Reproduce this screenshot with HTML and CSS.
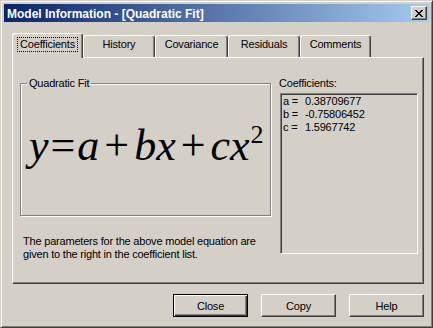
FILE: index.html
```html
<!DOCTYPE html>
<html>
<head>
<meta charset="utf-8">
<title>Model Information</title>
<link rel="stylesheet" href="styles.css">
</head>
<body>
<div class="window">
  <div class="titlebar">
    <span class="title">Model Information - [Quadratic Fit]</span>
    <button class="close-btn" aria-label="Close">
      <svg width="8" height="7" viewBox="0 0 8 7" shape-rendering="crispEdges">
        <path d="M0 0h2v1h-2z M6 0h2v1h-2z M1 1h2v1h-2z M5 1h2v1h-2z M2 2h4v1h-4z M3 3h2v1h-2z M2 4h4v1h-4z M1 5h2v1h-2z M5 5h2v1h-2z M0 6h2v1h-2z M6 6h2v1h-2z" fill="#000"/>
      </svg>
    </button>
  </div>
  <div class="client">
    <div class="tabs">
      <div class="tab tab-selected w-coef"><span class="focus">Coefficients</span></div>
      <div class="tab w-history">History</div>
      <div class="tab w-cov">Covariance</div>
      <div class="tab w-res">Residuals</div>
      <div class="tab w-com">Comments</div>
    </div>
    <div class="panel">
      <div class="left-col">
        <fieldset class="group">
          <legend>Quadratic Fit</legend>
          <div class="equation"><i>y</i><span class="eq">=</span><i>a</i><span class="op">+</span><i>bx</i><span class="op">+</span><i>cx</i><span class="sup">2</span></div>
        </fieldset>
        <p class="desc">The parameters for the above model equation are given to the right in the coefficient list.</p>
      </div>
      <div class="right-col">
        <div class="list-label">Coefficients:</div>
        <div class="listbox">
          <div class="row"><span class="key">a =</span><span>0.38709677</span></div>
          <div class="row"><span class="key">b =</span><span>-0.75806452</span></div>
          <div class="row"><span class="key">c =</span><span>1.5967742</span></div>
        </div>
      </div>
    </div>
    <div class="buttons">
      <button class="btn btn-default">Close</button>
      <button class="btn">Copy</button>
      <button class="btn">Help</button>
    </div>
  </div>
</div>
</body>
</html>
```
FILE: styles.css
```css
html, body {
  margin: 0;
  padding: 0;
  background: #d4d0c8;
}

.window {
  width: 433px;
  height: 328px;
  box-sizing: border-box;
  border: 1px solid;
  border-color: #d4d0c8 #404040 #404040 #d4d0c8;
  box-shadow: inset 1px 1px #ffffff, inset -1px -1px #808080;
  padding: 3px;
  background: #d4d0c8;
  font-family: "Liberation Sans", Arial, sans-serif;
  font-size: 11px;
  letter-spacing: -0.2px;
  color: #000;
}

.titlebar {
  height: 18px;
  display: flex;
  align-items: flex-start;
  justify-content: space-between;
  background: linear-gradient(to right, #0a246a, #a6caf0);
}

.title {
  color: #fff;
  font-weight: bold;
  font-size: 12px;
  letter-spacing: 0;
  line-height: 14px;
  padding: 3px 0 0 3px;
  white-space: nowrap;
}

.close-btn {
  width: 16px;
  height: 14px;
  margin: 2px 2px 0 0;
  padding: 0;
  display: flex;
  align-items: center;
  justify-content: center;
  background: #d4d0c8;
  border: 1px solid;
  border-color: #ffffff #404040 #404040 #ffffff;
  box-shadow: inset -1px -1px #808080;
  box-sizing: border-box;
}

.client {
  padding: 11px 5px 0 8px;
}

.tabs {
  height: 24px;
  display: flex;
  align-items: flex-end;
}

.tab {
  height: 22px;
  box-sizing: border-box;
  border-top: 1px solid #fff;
  border-left: 1px solid #fff;
  border-right: 1px solid #404040;
  box-shadow: inset -1px 0 #808080;
  border-radius: 3px 3px 0 0;
  display: flex;
  justify-content: center;
  align-items: flex-start;
  padding-top: 2px;
  line-height: 13px;
  white-space: nowrap;
  background: #d4d0c8;
}

.tab-selected {
  height: 25px;
  margin-bottom: -1px;
  padding-top: 3px;
  position: relative;
  z-index: 1;
}

.focus {
  border: 1px dotted #000;
  padding: 0 2px;
  line-height: 13px;
}

.w-coef { width: 71px; }
.w-history { width: 72px; }
.w-cov { width: 73px; }
.w-res { width: 72px; }
.w-com { width: 71px; }

.panel {
  height: 227px;
  box-sizing: border-box;
  border: 1px solid;
  border-color: #ffffff #404040 #404040 #ffffff;
  box-shadow: inset -1px -1px #808080;
  padding: 19px 0 0 7px;
  display: flex;
  gap: 8px;
}

.left-col {
  width: 251px;
}

.group {
  width: 251px;
  box-sizing: border-box;
  margin: 0;
  padding: 0;
  border: 1px solid #808080;
  box-shadow: inset 1px 1px #ffffff, 1px 1px #ffffff;
  min-width: 0;
}

.group legend {
  margin-left: 6px;
  padding: 0 2px;
  line-height: 13px;
  background: #d4d0c8;
}

.equation {
  height: 125px;
  box-sizing: border-box;
  padding: 35px 0 0 8px;
  font-family: "Liberation Serif", "Times New Roman", serif;
  font-size: 44px;
  line-height: 42px;
  letter-spacing: 0;
  white-space: nowrap;
}

.equation i {
  font-style: italic;
}

.eq {
  margin: 0 2px;
}

.op {
  margin: 0 5px;
}

.sup {
  font-size: 26px;
  line-height: 0;
  vertical-align: 17px;
  margin-left: 1px;
}

.desc {
  margin: 19px 0 0 3px;
  width: 248px;
  line-height: 13px;
}

.right-col {
  display: flex;
  flex-direction: column;
}

.list-label {
  line-height: 13px;
}

.listbox {
  margin: 3px 0 0 1px;
  width: 138px;
  height: 161px;
  box-sizing: border-box;
  border: 1px solid;
  border-color: #808080 #ffffff #ffffff #808080;
  box-shadow: inset 1px 1px #404040;
  background: #d4d0c8;
  padding: 1px 2px;
}

.row {
  line-height: 13px;
  white-space: nowrap;
}

.key {
  display: inline-block;
  width: 22px;
}

.buttons {
  display: flex;
  justify-content: flex-end;
  gap: 13px;
  margin-top: 10px;
}

.btn {
  width: 75px;
  height: 23px;
  box-sizing: border-box;
  background: #d4d0c8;
  border: 1px solid;
  border-color: #ffffff #404040 #404040 #ffffff;
  box-shadow: inset -1px -1px #808080;
  font-family: "Liberation Sans", Arial, sans-serif;
  font-size: 11px;
  letter-spacing: -0.2px;
  color: #000;
  padding: 0;
}

.btn-default {
  border: 1px solid #000;
  box-shadow: inset 1px 1px #ffffff, inset -1px -1px #404040, inset -2px -2px #808080;
}
```
